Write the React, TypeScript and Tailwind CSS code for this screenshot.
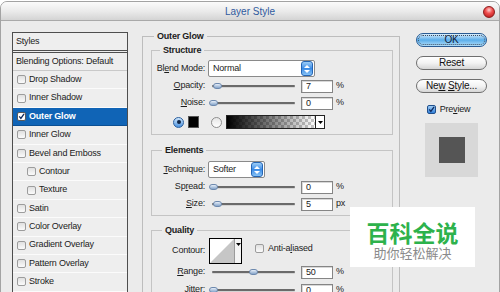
import React from "react";

type Item = { name: string; indent?: boolean; on?: boolean };

const items: Item[] = [
  { name: "Drop Shadow" },
  { name: "Inner Shadow" },
  { name: "Outer Glow", on: true },
  { name: "Inner Glow" },
  { name: "Bevel and Emboss" },
  { name: "Contour", indent: true },
  { name: "Texture", indent: true },
  { name: "Satin" },
  { name: "Color Overlay" },
  { name: "Gradient Overlay" },
  { name: "Pattern Overlay" },
  { name: "Stroke" },
];

const Tick = ({ color }: { color: string }) => (
  <svg viewBox="0 0 9 9" className="h-[9px] w-[9px]">
    <path d="M1.6 4.4 L3.7 6.9 L7.8 1.2" fill="none" stroke={color} strokeWidth="1.7" />
  </svg>
);

function Box({ checked, blue }: { checked?: boolean; blue?: boolean }) {
  const cls = blue
    ? "border-[#1f4f8c] bg-gradient-to-b from-[#9fcdf5] to-[#2f7fd8]"
    : checked
      ? "border-[#5a5a5a] bg-white"
      : "border-[#9c9c9c] bg-gradient-to-b from-[#e0e0e0] to-[#fbfbfb]";
  return (
    <span className={`flex h-[9px] w-[9px] shrink-0 items-center justify-center rounded-[2px] border ${cls}`}>
      {checked && <Tick color="#0f2a5e" />}
    </span>
  );
}

function Stepper() {
  return (
    <span className="flex h-[15px] w-[12px] flex-col items-center justify-center gap-[2px] rounded-[3px] border border-[#2465b5] bg-gradient-to-b from-[#9bcdf7] via-[#3a8be6] to-[#86c2f5]">
      <svg width="6" height="3">
        <path d="M0 3 L3 0 L6 3Z" fill="#fff" />
      </svg>
      <svg width="6" height="3">
        <path d="M0 0 L6 0 L3 3Z" fill="#fff" />
      </svg>
    </span>
  );
}

function Label({ children }: { children: React.ReactNode }) {
  return <div className="w-[53px] shrink-0 text-right">{children}</div>;
}

function Slider({ pos }: { pos: number }) {
  return (
    <div className="relative ml-[7px] h-[14px] w-[83px] shrink-0">
      <div className="absolute left-0 right-0 top-[6px] h-[2px] rounded-full bg-[#6a6a6a] shadow-[0_1px_0_#d4d4d4]" />
      <div
        className="absolute top-[4px] h-[6px] w-[9px] rounded-full border border-[#6d89ae] bg-gradient-to-b from-[#e6eef8] to-[#86a5ca]"
        style={{ left: pos }}
      />
    </div>
  );
}

function NumBox({ v, unit }: { v: string; unit: string }) {
  return (
    <>
      <div className="ml-[6px] h-[13px] w-[32px] shrink-0 border border-[#858585] bg-white pl-[4px] leading-[11px] shadow-[inset_1px_1px_0_#d8d8d8]">
        {v}
      </div>
      <span className="ml-[3px]">{unit}</span>
    </>
  );
}

function SliderRow({ label, pos, v, unit, cls }: { label: React.ReactNode; pos: number; v: string; unit: string; cls: string }) {
  return (
    <div className={`flex h-[14px] items-center ${cls}`}>
      <Label>{label}</Label>
      <Slider pos={pos} />
      <NumBox v={v} unit={unit} />
    </div>
  );
}

function Select({ text, w }: { text: string; w: string }) {
  return (
    <div className={`ml-[3px] flex h-[17px] items-center justify-between rounded-[2px] border border-[#8a8a8a] bg-white pl-[4px] pr-[1px] ${w}`}>
      <span>{text}</span>
      <Stepper />
    </div>
  );
}

function Pill({ children, blue }: { children: React.ReactNode; blue?: boolean }) {
  return (
    <div
      className={
        blue
          ? "h-[14px] w-[71px] rounded-full border border-[#2a5b93] bg-gradient-to-b from-[#d9eefc] via-[#5aaeea] to-[#b0def9] text-center text-[10px] leading-[12px] text-[#10203a] outline-1 outline-dotted outline-offset-[-3px] outline-[#3b4a5e]"
          : "h-[14px] w-[71px] rounded-full border border-[#6f6f6f] bg-gradient-to-b from-white via-[#f3f3f3] to-[#d6d6d6] text-center text-[10px] leading-[12px] text-[#111]"
      }
    >
      {children}
    </div>
  );
}

export default function App() {
  return (
    <div className="relative h-[292px] w-[500px] overflow-hidden bg-white font-['Liberation_Sans',Arial,sans-serif] text-[9px] tracking-[-0.2px] text-[#1b1b1b]">
      <div className="mt-[1px] h-[300px] rounded-t-[7px] border border-[#a3a3a3] bg-[#ebebeb]">
        {/* title bar */}
        <div className="relative flex h-[19px] items-center justify-center rounded-t-[6px] border-b border-[#a9a9a9] bg-gradient-to-b from-[#fbfbfb] via-[#ebebeb] to-[#d4d4d4]">
          <span className="text-[10px] tracking-normal text-[#2f5a9e]">Layer Style</span>
          <span className="absolute right-[4px] top-[4px] h-[12px] w-[12px] rounded-full border border-[#8c1c1c] bg-[radial-gradient(circle_at_50%_30%,#ffd0d0_0%,#f05050_40%,#b01010_100%)]" />
        </div>

        <div className="flex items-start">
          {/* styles list */}
          <div className="ml-[11px] mt-[11px] w-[116px] shrink-0 border border-[#4e4e4e] bg-[#eeeeee]">
            <div className="flex h-[18px] items-center border-b border-[#4e4e4e] pl-[3px]">Styles</div>
            <div className="mt-[1px] flex h-[19px] items-center border-y border-t-[#4e4e4e] border-b-[#c9c9c9] pl-[3px]">
              Blending Options: Default
            </div>
            {items.map((it) => (
              <div
                key={it.name}
                className={`flex h-[18.4px] items-center gap-[3px] border-b ${it.indent ? "pl-[14px]" : "pl-[4px]"} ${
                  it.on ? "border-[#0b4f93] bg-[#1064b6] font-bold text-white" : "border-[#fbfbfb]"
                }`}
              >
                <Box checked={it.on} />
                <span>{it.name}</span>
              </div>
            ))}
          </div>

          {/* main settings */}
          <fieldset className="ml-[14px] mt-[10px] w-[258px] shrink-0 border border-[#bdbdbd] pb-[10px]">
            <legend className="ml-[11px] px-[3px] text-[9px] font-bold leading-[11px]">Outer Glow</legend>

            <fieldset className="ml-[8px] mt-[3px] w-[242px] border border-[#c4c4c4] pb-[5px]">
              <legend className="ml-[8px] px-[3px] font-bold leading-[11px]">Structure</legend>
              <div className="mt-[4px] flex h-[17px] items-center">
                <Label>
                  Bl<u>e</u>nd Mode:
                </Label>
                <Select text="Normal" w="w-[107px]" />
              </div>
              <SliderRow label={<><u>O</u>pacity:</>} pos={1} v="7" unit="%" cls="mt-[2px]" />
              <SliderRow label={<><u>N</u>oise:</>} pos={-3} v="0" unit="%" cls="mt-[3px]" />
              <div className="mt-[5px] flex h-[14px] items-center pl-[21px]">
                <span className="flex h-[11px] w-[11px] items-center justify-center rounded-full border border-[#2a5f9f] bg-gradient-to-b from-[#cfe6fa] to-[#4a92de]">
                  <span className="h-[4px] w-[4px] rounded-full bg-[#0e2446]" />
                </span>
                <span className="ml-[4px] h-[12px] w-[11px] border border-[#555] bg-black" />
                <span className="ml-[12px] h-[11px] w-[11px] rounded-full border border-[#8e8e8e] bg-gradient-to-b from-[#e6e6e6] to-white" />
                <div className="ml-[4px] flex h-[14px] w-[99px] border border-[#222]">
                  <div className="flex-1 bg-[image:linear-gradient(to_right,#000,rgba(0,0,0,0)),repeating-conic-gradient(#c8c8c8_0_25%,#fff_0_50%)] bg-[length:100%_100%,6px_6px]" />
                  <div className="flex w-[9px] items-center justify-center border-l border-[#222] bg-white">
                    <svg width="5" height="3">
                      <path d="M0 0 L5 0 L2.5 3Z" fill="#000" />
                    </svg>
                  </div>
                </div>
              </div>
            </fieldset>

            <fieldset className="ml-[8px] mt-[10px] w-[242px] border border-[#c4c4c4] pb-[4px]">
              <legend className="ml-[10px] px-[3px] font-bold leading-[11px]">Elements</legend>
              <div className="mt-[5px] flex h-[17px] items-center">
                <Label>
                  <u>T</u>echnique:
                </Label>
                <Select text="Softer" w="w-[57px]" />
              </div>
              <SliderRow label={<>Sp<u>r</u>ead:</>} pos={-3} v="0" unit="%" cls="mt-[2px]" />
              <SliderRow label={<><u>S</u>ize:</>} pos={1} v="5" unit="px" cls="mt-[3px]" />
            </fieldset>

            <fieldset className="ml-[8px] mt-[9px] w-[242px] border border-[#c4c4c4] pb-[6px]">
              <legend className="ml-[10px] px-[3px] font-bold leading-[11px]">Quality</legend>
              <div className="mt-[2px] flex h-[26px] items-center">
                <Label>Contour:</Label>
                <div className="ml-[4px] flex h-[26px] w-[33px] border border-black bg-white">
                  <svg width="24" height="24" className="shrink-0">
                    <path d="M0 24 L24 0 L24 24Z" fill="#c6c6c6" />
                  </svg>
                  <div className="flex flex-1 justify-center border-l border-[#9a9a9a] bg-[#f4f4f4] pt-[4px]">
                    <svg width="5" height="3">
                      <path d="M0 0 L5 0 L2.5 3Z" fill="#000" />
                    </svg>
                  </div>
                </div>
                <span className="ml-[13px] -mt-[5px] flex items-center gap-[4px]">
                  <Box />
                  <span>
                    Anti-a<u>l</u>iased
                  </span>
                </span>
              </div>
              <SliderRow label={<><u>R</u>ange:</>} pos={37} v="50" unit="%" cls="mt-[1px]" />
              <SliderRow label={<><u>J</u>itter:</>} pos={-3} v="0" unit="%" cls="mt-[4px]" />
            </fieldset>
          </fieldset>

          {/* buttons */}
          <div className="ml-[16px] mt-[12px] flex w-[71px] shrink-0 flex-col items-center">
            <Pill blue>OK</Pill>
            <div className="mt-[9px]">
              <Pill>Reset</Pill>
            </div>
            <div className="mt-[9px]">
              <Pill>
                Ne<u>w</u> <u>S</u>tyle...
              </Pill>
            </div>
            <div className="mt-[10px] flex items-center gap-[4px] pr-[6px]">
              <Box checked blue />
              <span>
                Pre<u>v</u>iew
              </span>
            </div>
            <div className="mt-[6px] flex h-[54px] w-[53px] items-center justify-center bg-[#d8d8d8]">
              <div className="h-[26px] w-[26px] bg-[#555555]" />
            </div>
          </div>
        </div>
      </div>

      {/* watermark */}
      <div className="absolute left-[350px] top-[207px] flex h-[60px] w-[125px] flex-col items-center bg-white pt-[13px] tracking-normal">
        <div className="font-['Noto_Sans_CJK_SC',sans-serif] text-[23px] font-bold leading-[24px] text-[#2db24c]">百科全说</div>
        <div className="mt-[1px] font-['Noto_Sans_CJK_SC',sans-serif] text-[13px] leading-[16px] text-[#8b8b8b]">助你轻松解决</div>
      </div>
    </div>
  );
}
